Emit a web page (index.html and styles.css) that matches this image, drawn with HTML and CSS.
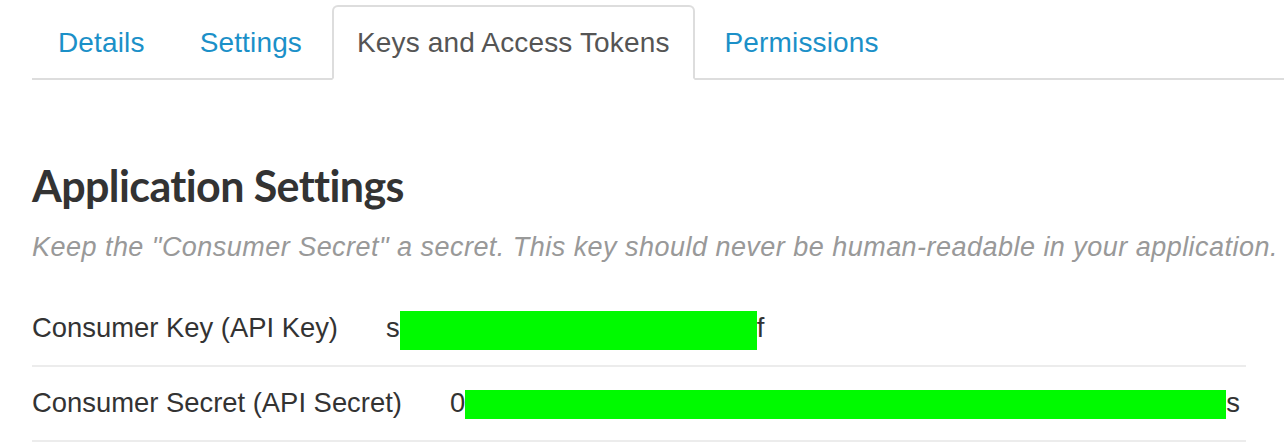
FILE: index.html
```html
<!DOCTYPE html>
<html lang="en">
<head>
<meta charset="utf-8">
<title>Keys and Access Tokens</title>
<link rel="stylesheet" href="styles.css">
</head>
<body>
  <ul class="tabs">
    <li class="tab"><a href="#">Details</a></li>
    <li class="tab"><a href="#">Settings</a></li>
    <li class="tab tab--active"><a href="#">Keys and Access Tokens</a></li>
    <li class="tab"><a href="#">Permissions</a></li>
  </ul>

  <section class="app-settings">
    <h2 class="title">Application Settings</h2>
    <p class="hint">Keep the "Consumer Secret" a secret. This key should never be human-readable in your application.</p>

    <div class="keys">
      <div class="row">
        <span class="label">Consumer Key (API Key)</span>
        <span class="value">s<span class="redact redact--key"></span>f</span>
      </div>
      <div class="row">
        <span class="label">Consumer Secret (API Secret)</span>
        <span class="value">0<span class="redact redact--secret"></span>s</span>
      </div>
    </div>
  </section>
</body>
</html>
```

FILE: styles.css
```css
html, body {
  margin: 0;
  padding: 0;
  background: #fff;
}

body {
  padding: 5px 0 0 32px;
  font-family: "Liberation Sans", Arial, sans-serif;
  color: #333;
}

/* Tabs */
.tabs {
  list-style: none;
  margin: 0;
  padding: 0 0 0 1px;
  display: flex;
  border-bottom: 2px solid #ddd;
}

.tab {
  margin: 0 5px -2px 0;
}

.tab a {
  display: block;
  padding: 16px 23px;
  border: 2px solid transparent;
  border-radius: 6px 6px 0 0;
  font-size: 28px;
  line-height: 39px;
  letter-spacing: 0.15px;
  color: #1b90c8;
  text-decoration: none;
}

.tab--active a {
  color: #555;
  background: #fff;
  border-color: #ddd;
  border-bottom-color: transparent;
}

/* Content */
.title {
  margin: 80px 0 0;
  font-family: Lato, "Open Sans", sans-serif;
  font-weight: 700;
  font-size: 43px;
  line-height: 52px;
  letter-spacing: -0.6px;
  color: #333;
}

.hint {
  margin: 17px 0 0;
  font-style: italic;
  font-size: 27px;
  line-height: 36px;
  letter-spacing: 0.47px;
  color: #999;
  white-space: nowrap;
}

.keys {
  width: 1214px;
  margin-top: 27px;
}

.row {
  display: flex;
  align-items: baseline;
  gap: 48px;
  padding: 16px 0 18px;
  border-bottom: 2px solid #ececec;
  font-size: 27.4px;
  line-height: 39px;
  color: #333;
}

.value {
  white-space: nowrap;
}

.redact {
  display: inline-block;
  vertical-align: baseline;
  background: #00fa00;
}

.redact--key {
  width: 357px;
  height: 39px;
  margin-bottom: -13px;
}

.redact--secret {
  width: 761px;
  height: 29px;
  margin-bottom: -7px;
}
```
